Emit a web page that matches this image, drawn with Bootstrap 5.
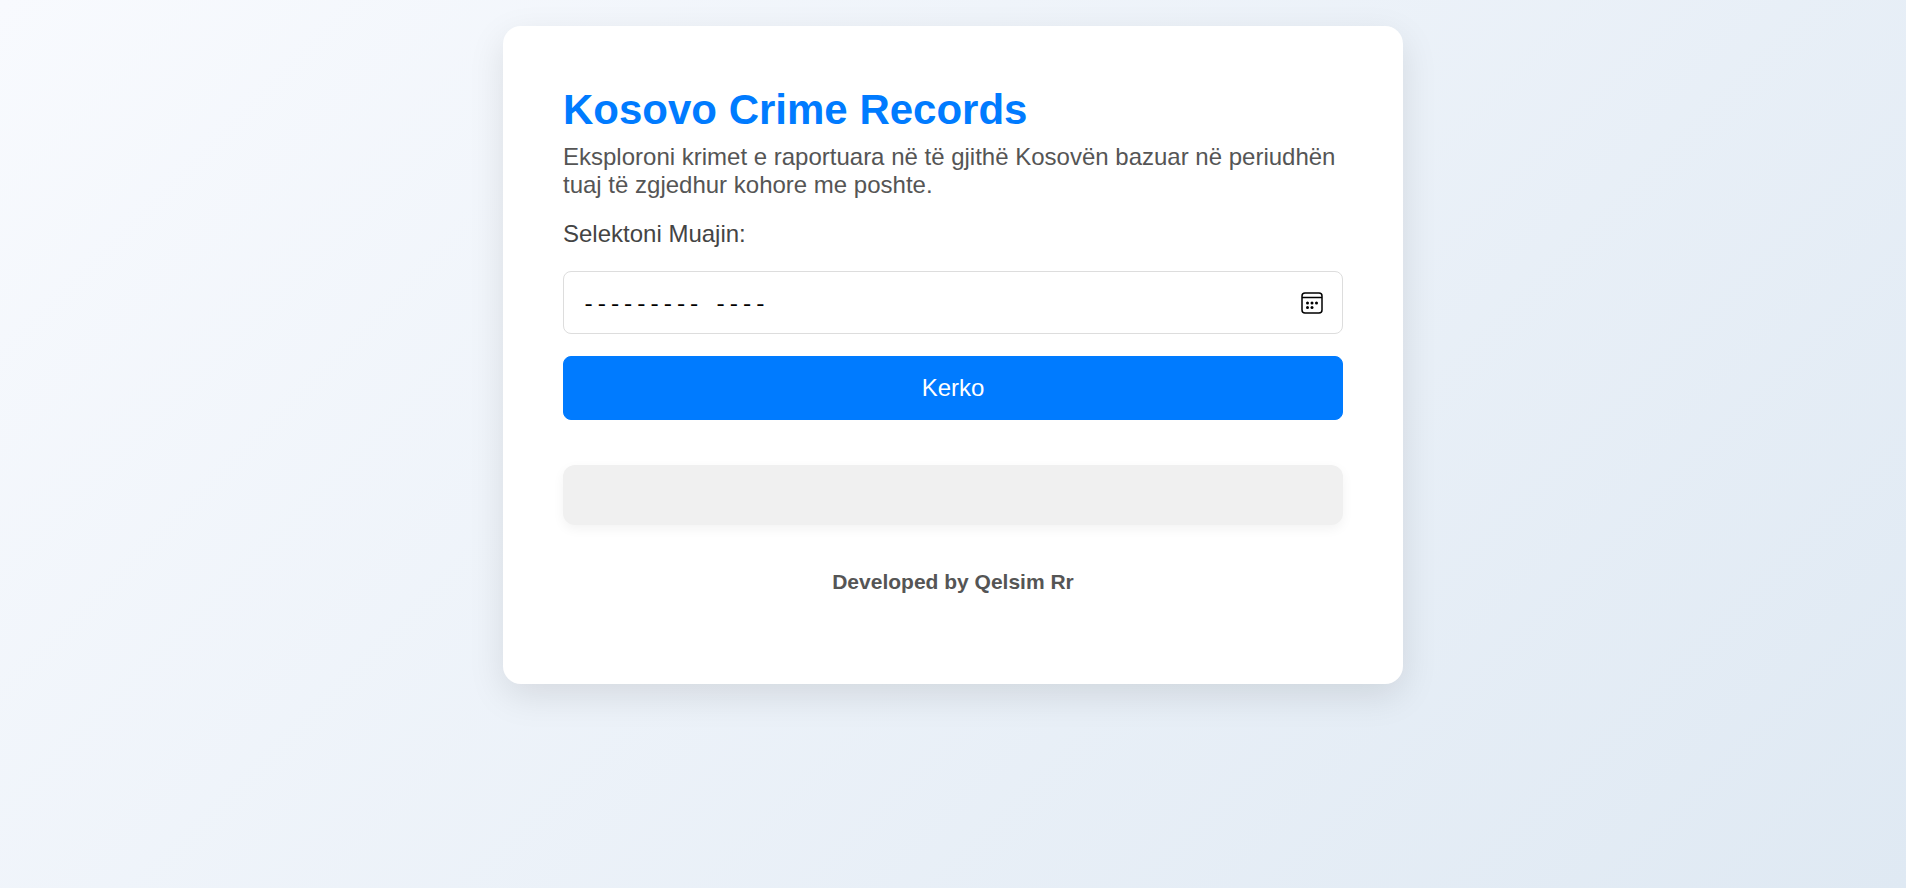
<!DOCTYPE html>
<html lang="sq">
<head>
<meta charset="utf-8">
<meta name="viewport" content="width=device-width, initial-scale=1">
<title>Kosovo Crime Records</title>
<link href="https://cdn.jsdelivr.net/npm/bootstrap@5.3.0/dist/css/bootstrap.min.css" rel="stylesheet">
<style>
  body {
    font-family: "Liberation Sans", Arial, sans-serif;
    font-size: 24px;
    line-height: 28px;
    color: #555;
    background: linear-gradient(135deg, #f8fafe, #dfe9f3);
  }
  .panel {
    max-width: 900px;
    margin-top: 26px;
    padding: 60px;
    border-radius: 18px;
    box-shadow: 0 12px 36px rgba(0, 0, 0, .1);
  }
  .panel-title { font-size: 42px; line-height: 48px; margin-bottom: 9px; color: #007bff; }
  .intro { margin-bottom: 21px; }
  .month-label { margin-bottom: 23px; color: #444; }
  .month-field {
    height: 63px;
    padding: 19px 60px 13px 18px;
    font-family: "Liberation Mono", monospace;
    font-size: 22px;
    line-height: 28px;
    color: #000;
    border-color: #ddd;
    border-radius: 8px;
  }
  .month-field::placeholder { color: #000; }
  .picker-btn { padding-right: 20px; color: #000; }
  .search-btn {
    --bs-btn-bg: #007bff;
    --bs-btn-border-color: #007bff;
    --bs-btn-font-size: 24px;
    --bs-btn-line-height: 28px;
    --bs-btn-padding-y: 17px;
    --bs-btn-border-radius: 8px;
    margin-top: 22px;
  }
  .results {
    margin-top: 45px;
    padding: 30px;
    background: #f0f0f0;
    border-radius: 12px;
    box-shadow: 0 4px 12px rgba(0, 0, 0, .05);
  }
  .credit { font-size: 21px; line-height: 24px; margin-top: 45px; padding-bottom: 30px; }
</style>
</head>
<body class="min-vh-100 d-flex flex-column align-items-center">
  <main class="panel bg-white w-100">
    <h1 class="panel-title fw-bold">Kosovo Crime Records</h1>
    <p class="intro">Eksploroni krimet e raportuara në të gjithë Kosovën bazuar në periudhën tuaj të zgjedhur kohore me poshte.</p>
    <form>
      <label class="month-label d-block" for="month">Selektoni Muajin:</label>
      <div class="position-relative">
        <input class="month-field form-control" type="text" id="month" placeholder="--------- ----" autocomplete="off">
        <button class="picker-btn position-absolute top-0 end-0 h-100 border-0 bg-transparent d-flex align-items-center" type="button" aria-label="Kalendari">
          <svg width="22" height="22" viewBox="0 0 22 22" fill="none" stroke="currentColor" stroke-width="1.5" aria-hidden="true">
            <rect x="1" y="1" width="20" height="20" rx="3"/>
            <path d="M1 5.5h20"/>
            <g fill="currentColor" stroke="none">
              <circle cx="6.500" cy="11" r="1.500"/><circle cx="11" cy="11" r="1.500"/><circle cx="15.500" cy="11" r="1.500"/>
              <circle cx="6.500" cy="15.500" r="1.500"/><circle cx="11" cy="15.500" r="1.500"/>
            </g>
          </svg>
        </button>
      </div>
      <button class="search-btn btn btn-primary w-100" type="button">Kerko</button>
    </form>
    <div class="results"></div>
    <footer class="credit text-center fw-bold">Developed by Qelsim Rr</footer>
  </main>
  <script src="https://cdn.jsdelivr.net/npm/bootstrap@5.3.0/dist/js/bootstrap.bundle.min.js"></script>
</body>
</html>
